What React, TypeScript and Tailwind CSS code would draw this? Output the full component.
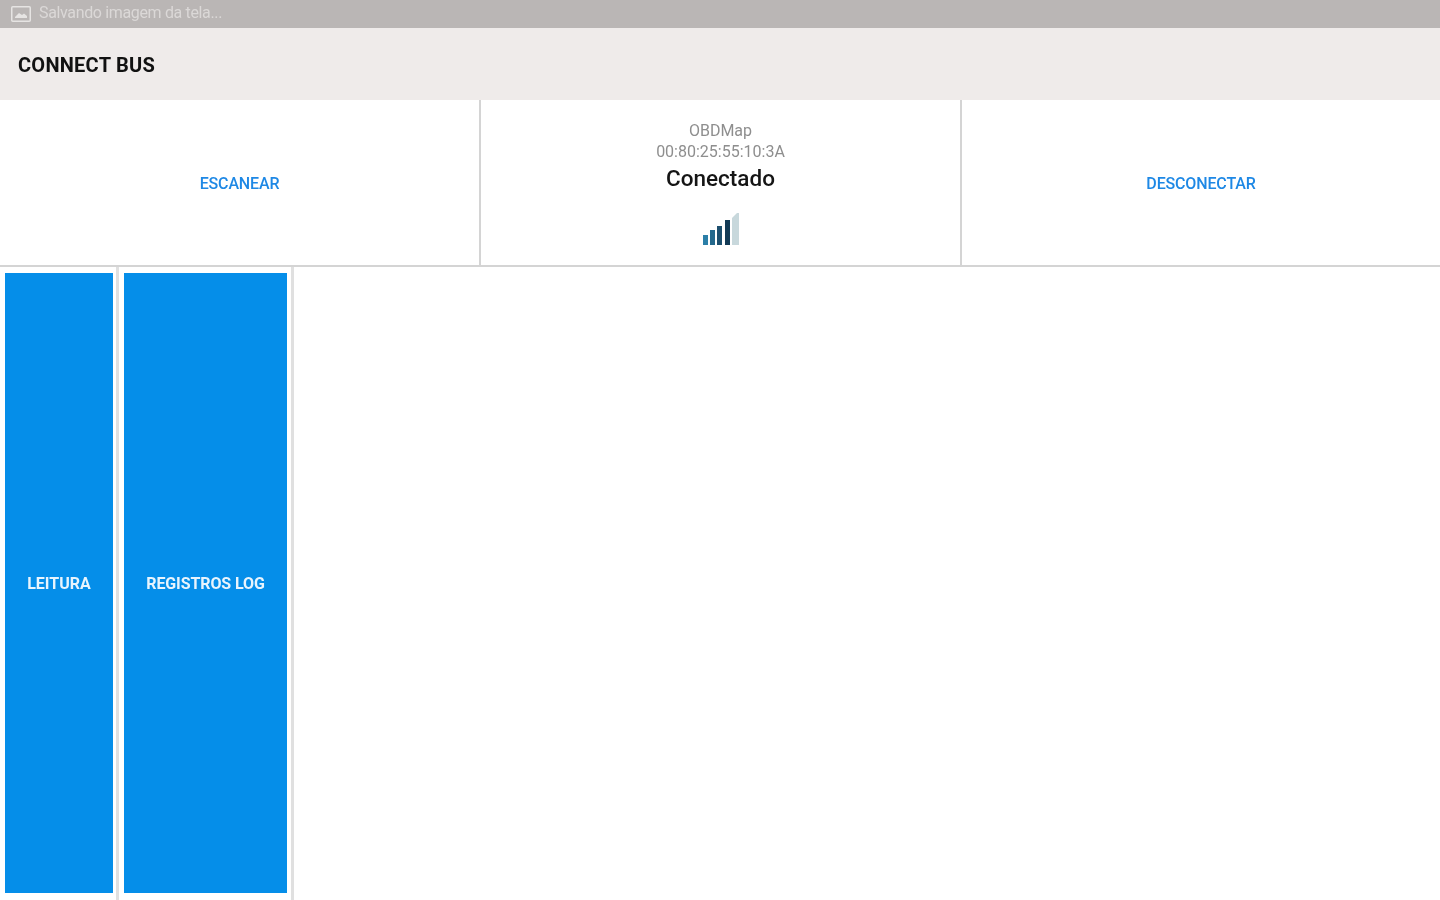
const App = () => {
  return (
    <div className="w-[1440px] h-[900px] overflow-hidden bg-white flex flex-col font-['Roboto',sans-serif]">
      {/* status bar */}
      <div className="h-[28px] bg-[#bab6b5] flex items-center pl-[11px] gap-[8px]">
        <svg width="20" height="16" viewBox="0 0 20 16" className="text-[#e6e4e3] blur-[0.6px]">
          <rect x="0.75" y="0.75" width="18.5" height="14.5" rx="1" fill="none" stroke="currentColor" strokeWidth="1.5" />
          <path d="M4 11 L8 7 L11 9 L13 7.5 L16 10 V12 H4 Z" fill="currentColor" />
        </svg>
        <span className="text-[16px] text-[#dbd8d7] tracking-[-0.35px] blur-[0.7px] -translate-y-px">Salvando imagem da tela...</span>
      </div>

      {/* title bar */}
      <div className="h-[72px] bg-[#efebea] flex items-center pl-[18px]">
        <span className="text-[20px] font-bold text-[#111111] tracking-[0.25px] blur-[0.6px] translate-y-[1px]">CONNECT BUS</span>
      </div>

      {/* connection row */}
      <div className="h-[167px] grid grid-cols-[481px_481px_1fr] border-b-2 border-[#d4d4d4]">
        <div className="flex items-center justify-center border-r-2 border-[#d4d4d4]">
          <span className="text-[16px] font-medium text-[#1e88e5] tracking-[-0.15px] blur-[0.7px] translate-y-px">ESCANEAR</span>
        </div>
        <div className="flex flex-col items-center border-r-2 border-[#d4d4d4] pt-[19px]">
          <span className="text-[16px] leading-[21px] text-[#8e8e8e] blur-[0.7px] translate-y-px">OBDMap</span>
          <span className="text-[16px] leading-[21px] text-[#8e8e8e] blur-[0.7px] translate-y-px">00:80:25:55:10:3A</span>
          <span className="text-[22.5px] leading-[30px] font-medium text-[#151515] blur-[0.6px] mt-[2px]">Conectado</span>
          <svg width="40" height="34" viewBox="0 0 40 34" className="mt-[19px] blur-[0.6px]">
            <rect x="2" y="23" width="5" height="10" fill="#2b7fa8" />
            <rect x="9" y="18" width="5" height="15" fill="#24688c" />
            <rect x="16" y="14" width="5" height="19" fill="#1d4f6e" />
            <rect x="24" y="8" width="5" height="25" fill="#123a55" />
            <path d="M31 6 L36 1 H38 V33 H31 Z" fill="#c8d8dc" />
          </svg>
        </div>
        <div className="flex items-center justify-center">
          <span className="text-[16px] font-medium text-[#1e88e5] tracking-[-0.15px] blur-[0.7px] translate-y-px">DESCONECTAR</span>
        </div>
      </div>

      {/* tabs */}
      <div className="flex-1 flex">
        <div className="w-[119px] border-r-[3px] border-[#e0e0e0] pl-[5px] pr-[3px] pt-[6px] pb-[7px]">
          <div className="h-full bg-[#058ee9] flex items-center justify-center">
            <span className="text-[16px] font-bold text-[#e8f4fd] tracking-[0px] blur-[0.7px] translate-y-px">LEITURA</span>
          </div>
        </div>
        <div className="w-[175px] border-r-[3px] border-[#e0e0e0] pl-[5px] pr-[4px] pt-[6px] pb-[7px]">
          <div className="h-full bg-[#058ee9] flex items-center justify-center">
            <span className="text-[16px] font-bold text-[#e8f4fd] tracking-[-0.1px] blur-[0.7px] translate-y-px">REGISTROS LOG</span>
          </div>
        </div>
      </div>
    </div>
  );
};

export default App;
